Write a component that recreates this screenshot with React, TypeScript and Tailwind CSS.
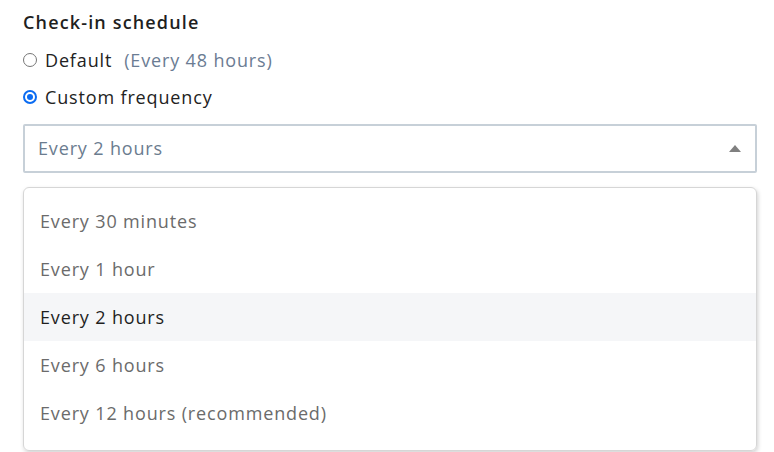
import React from "react";

const items = [
  "Every 30 minutes",
  "Every 1 hour",
  "Every 2 hours",
  "Every 6 hours",
  "Every 12 hours (recommended)",
];

export default function App() {
  return (
    <div className="w-[774px] h-[452px] bg-white overflow-hidden pl-[23px] pr-[17px] pt-[10px] font-['Open_Sans','Liberation_Sans',sans-serif]">
      <div className="text-[18px] leading-[24px] font-semibold tracking-[1.15px] text-[#1f1f1f]">Check-in schedule</div>
      <div className="flex items-center h-[28px] mt-[12px] tracking-[0.85px]">
        <span className="w-[14px] h-[14px] rounded-full border border-[#767676] bg-white" />
        <span className="ml-[8px] text-[18px] text-[#222]">Default</span>
        <span className="ml-[12px] text-[18px] text-[#6b7c93]">(Every 48 hours)</span>
      </div>
      <div className="flex items-center h-[28px] mt-[9px] tracking-[0.85px]">
        <span className="w-[14px] h-[14px] rounded-full border-2 border-[#0b6cf2] bg-white flex items-center justify-center">
          <span className="w-[6px] h-[6px] rounded-full bg-[#0b6cf2]" />
        </span>
        <span className="ml-[8px] text-[18px] text-[#222]">Custom frequency</span>
      </div>
      <div className="mt-[13px] h-[49px] border-2 border-[#c7d0d8] rounded-[2px] flex items-center justify-between pl-[13px] pr-[14px]">
        <span className="text-[18px] tracking-[0.85px] text-[#6b7c8f] -mt-[1px]">Every 2 hours</span>
        <svg width="12" height="7" viewBox="0 0 12 7"><path d="M6 0 L12 7 L0 7 Z" fill="#808080" /></svg>
      </div>
      <div className="mt-[14px] h-[264px] border border-[#d6d6d6] rounded-[6px] shadow-[1px_2px_4px_rgba(0,0,0,0.18)] pt-[9px]">
        {items.map((t, i) => (
          <div
            key={t}
            className={`h-[48px] flex items-center pl-[16px] text-[18px] tracking-[0.85px] ${i === 2 ? "bg-[#f5f6f8] text-[#1f1f1f]" : "text-[#6b6b6b]"}`}
          >
            {t}
          </div>
        ))}
      </div>
    </div>
  );
}
